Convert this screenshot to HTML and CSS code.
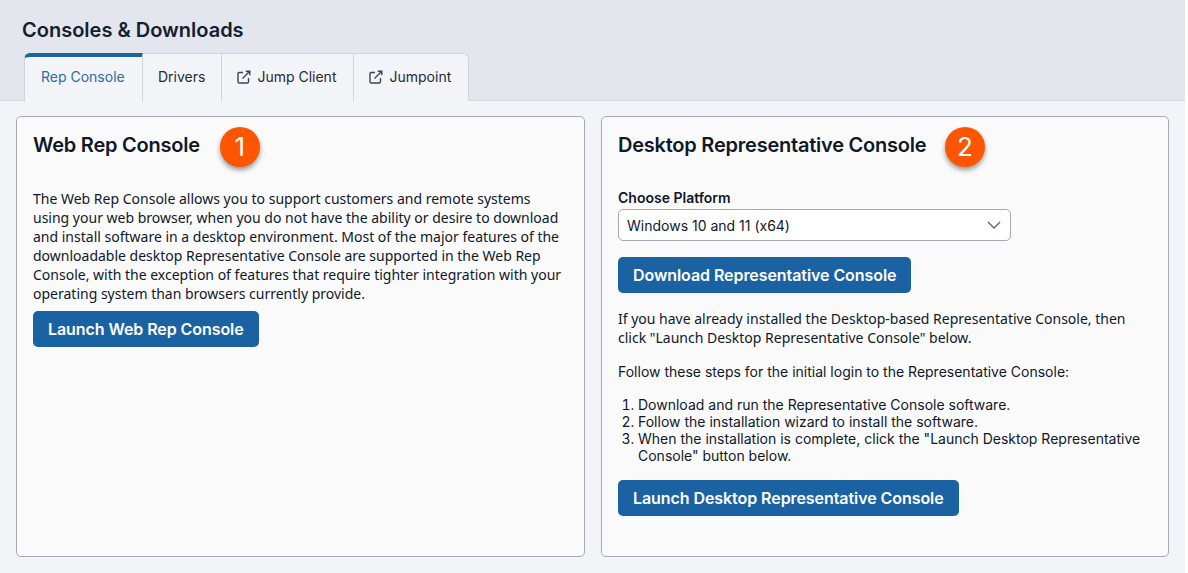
FILE: index.html
```html
<!DOCTYPE html>
<html lang="en">
<head>
<meta charset="utf-8">
<title>Consoles &amp; Downloads</title>
<link rel="stylesheet" href="styles.css">
</head>
<body>
<div class="app">
  <header class="top">
    <h1 class="page-title">Consoles &amp; Downloads</h1>
    <nav class="tabs">
      <a class="tab active">Rep Console</a>
      <a class="tab tab-plain">Drivers</a>
      <a class="tab"><svg class="ext" viewBox="0 0 14 14"><path d="M6 2.5H2.2A1.2 1.2 0 0 0 1 3.7v8.1A1.2 1.2 0 0 0 2.2 13h8.1a1.2 1.2 0 0 0 1.2-1.2V8M5.5 8.5 12.5 1.5M8.8 1.2h4v4"/></svg>Jump Client</a>
      <a class="tab"><svg class="ext" viewBox="0 0 14 14"><path d="M6 2.5H2.2A1.2 1.2 0 0 0 1 3.7v8.1A1.2 1.2 0 0 0 2.2 13h8.1a1.2 1.2 0 0 0 1.2-1.2V8M5.5 8.5 12.5 1.5M8.8 1.2h4v4"/></svg>Jumpoint</a>
    </nav>
  </header>
  <main class="panels">
    <section class="card">
      <div class="card-head">
        <h2 class="card-title">Web Rep Console</h2>
        <span class="badge">1</span>
      </div>
      <p class="copy">The Web Rep Console allows you to support customers and remote systems using your web browser, when you do not have the ability or desire to download and install software in a desktop environment. Most of the major features of the downloadable desktop Representative Console are supported in the Web Rep Console, with the exception of features that require tighter integration with your operating system than browsers currently provide.</p>
      <button class="btn btn-web">Launch Web Rep Console</button>
    </section>
    <section class="card card-desktop">
      <div class="card-head">
        <h2 class="card-title">Desktop Representative Console</h2>
        <span class="badge">2</span>
      </div>
      <label class="field-label">Choose Platform</label>
      <div class="select">
        <span>Windows 10 and 11 (x64)</span>
        <svg class="chev" viewBox="0 0 14 8"><path d="M1 1l6 6 6-6"/></svg>
      </div>
      <button class="btn btn-dl">Download Representative Console</button>
      <p class="copy gap-a">If you have already installed the Desktop-based Representative Console, then click "Launch Desktop Representative Console" below.</p>
      <p class="copy gap-b">Follow these steps for the initial login to the Representative Console:</p>
      <ol class="steps">
        <li>Download and run the Representative Console software.</li>
        <li>Follow the installation wizard to install the software.</li>
        <li>When the installation is complete, click the "Launch Desktop Representative Console" button below.</li>
      </ol>
      <button class="btn btn-launch">Launch Desktop Representative Console</button>
    </section>
  </main>
</div>
</body>
</html>
```
FILE: styles.css
```css
* { box-sizing: border-box; }
html, body { margin: 0; height: 100%; background: #fff; }
body { overflow: hidden; }
.app {
  width: 1185px;
  height: 573px;
  background: #f3f4f7;
  font-family: Inter, sans-serif;
  color: #101828;
}
.top {
  height: 101px;
  background: #e3e6ec;
  border-bottom: 1px solid #d0d4db;
  padding: 17px 0 0 22px;
}
.page-title {
  margin: 0;
  font-size: 20px;
  line-height: 27px;
  font-weight: 600;
  color: #14202f;
}
.tabs {
  display: flex;
  width: max-content;
  margin: 9px 0 0 2px;
  height: 48px;
  border: 1px solid #d0d4db;
  border-bottom: 0;
  border-radius: 6px 6px 0 0;
  background: #f3f4f7;
}
.tab {
  display: flex;
  align-items: center;
  padding: 0 17px 2px 15px;
  font-size: 14px;
  color: #1f2a3a;
  border-right: 1px solid #d0d4db;
  height: 47px;
}
.tab-plain { padding-right: 16px; }
.tab:last-child { border-right: 0; }
.tab.active {
  position: relative;
  width: 119px;
  padding: 0 0 6px 16px;
  color: #2f6ba8;
  margin: -1px 0 0 -1px;
  height: 49px;
  background: #f3f4f7;
  border-top: 4px solid #1b62a3;
  border-left: 1px solid #d0d4db;
  border-radius: 6px 0 0 0;
}
.ext {
  width: 14px;
  height: 14px;
  margin-right: 6px;
  fill: none;
  stroke: #3a4555;
  stroke-width: 1.4;
}
.panels {
  display: grid;
  grid-template-columns: 569px 568px;
  gap: 16px;
  padding: 15px 16px 0;
}
.card {
  height: 441px;
  background: #fafafb;
  border: 1px solid #a3a9b7;
  border-radius: 5px;
  padding: 0 16px;
}
.card-head {
  display: flex;
  align-items: center;
  height: 59px;
  padding-top: 1px;
}
.card-title {
  margin: -5px 0 0;
  font-size: 20px;
  line-height: 26px;
  font-weight: 600;
  color: #101828;
  letter-spacing: -0.23px;
}
.badge {
  width: 40px;
  height: 40px;
  margin-left: 20px;
  border-radius: 50%;
  background: #fe5500;
  color: #fff;
  font-size: 26px;
  line-height: 40px;
  text-align: center;
  box-shadow: 0 3px 5px rgba(0, 0, 0, 0.4);
}
.card-desktop .badge { margin-left: 18.5px; }
.copy {
  margin: 13px 0 0;
  font-family: "Noto Sans", sans-serif;
  font-size: 14px;
  line-height: 19px;
  color: #101828;
}
.btn {
  display: block;
  height: 36px;
  border: 0;
  border-radius: 5px;
  background: #1b62a3;
  color: #fff;
  font-family: Inter, sans-serif;
  font-size: 16px;
  font-weight: 600;
  letter-spacing: -0.07px;
  padding: 0 15px;
}
.btn-web { margin-top: 8px; }
.field-label {
  display: block;
  margin-top: 12px;
  font-size: 14px;
  line-height: 20px;
  font-weight: 600;
}
.select {
  display: flex;
  align-items: center;
  justify-content: space-between;
  width: 393px;
  height: 32px;
  margin-top: 1px;
  padding: 0 9px 0 8px;
  background: #fff;
  border: 1px solid #a3a9b7;
  border-radius: 5px;
  font-size: 14px;
}
.chev {
  width: 14px;
  height: 8px;
  fill: none;
  stroke: #5d6675;
  stroke-width: 1.4;
}
.btn-dl { margin-top: 16px; }
.card-desktop .gap-a { margin-top: 16px; }
.card-desktop .gap-b { margin-top: 15px; font-family: Inter, sans-serif; }
.steps {
  margin: 15px 0 0;
  padding: 0 0 0 20px;
  font-size: 14px;
  line-height: 17px;
}
.btn-launch { margin-top: 16px; }
```
